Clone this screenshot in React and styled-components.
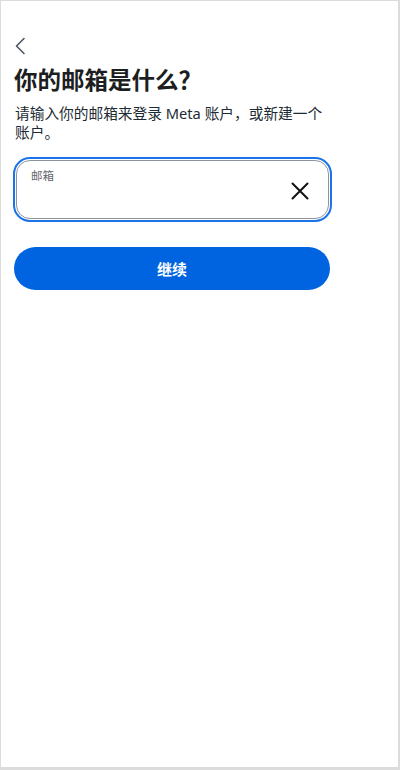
import React, { useState } from 'react';
import styled, { createGlobalStyle } from 'styled-components';

const GlobalStyles = createGlobalStyle`
  html, body {
    margin: 0;
    padding: 0;
    background: #ffffff;
  }
  * {
    box-sizing: border-box;
  }
  body {
    font-family: 'Noto Sans', 'Noto Sans CJK SC', sans-serif;
    color: #1c2b33;
  }
`;

const App = () => {
  const [email, setEmail] = useState('');

  return (
    <>
      <GlobalStyles />
      <Frame>
        <Content>
          <BackButton aria-label="返回">
            <svg width="12" height="18" viewBox="0 0 12 18" fill="none">
              <path d="M10 1.5 L2.5 9 L10 16.5" stroke="#4b5563" strokeWidth="1.6" strokeLinecap="round" strokeLinejoin="round" />
            </svg>
          </BackButton>
          <Title>你的邮箱是什么？</Title>
          <Subtitle>请输入你的邮箱来登录 Meta 账户，或新建一个账户。</Subtitle>
          <FieldRing>
            <Field>
              <FieldLabel>邮箱</FieldLabel>
              <FieldInput value={email} onChange={(e) => setEmail(e.target.value)} />
              <ClearButton aria-label="清除" onClick={() => setEmail('')}>
                <svg width="18" height="18" viewBox="0 0 18 18" fill="none">
                  <path d="M1.5 1.5 L16.5 16.5 M16.5 1.5 L1.5 16.5" stroke="#111111" strokeWidth="2" strokeLinecap="round" />
                </svg>
              </ClearButton>
            </Field>
          </FieldRing>
          <PrimaryButton>继续</PrimaryButton>
        </Content>
      </Frame>
    </>
  );
};

export default App;

const Frame = styled.div`
  width: 400px;
  height: 770px;
  border-top: 1px solid #dcdcdc;
  border-left: 1px solid #dcdcdc;
  border-right: 2px solid #dcdcdc;
  border-bottom: 3px solid #dcdcdc;
  background: #fff;
  overflow: hidden;
`;

const Content = styled.div`
  width: 332px;
  padding: 36px 0 0 12px;
  display: flex;
  flex-direction: column;
`;

const BackButton = styled.button`
  width: 14px;
  height: 18px;
  padding: 0;
  margin: 0 0 0 1px;
  border: none;
  background: none;
  display: flex;
  align-items: center;
  cursor: pointer;
`;

const Title = styled.h1`
  margin: 11px 0 0 1px;
  font-size: 23.5px;
  line-height: 28px;
  font-weight: 700;
  color: #1c1e21;
  letter-spacing: 0;
`;

const Subtitle = styled.p`
  margin: 10px 0 0 2px;
  width: 316px;
  font-size: 14.7px;
  line-height: 19px;
  color: #1c2b33;
`;

const FieldRing = styled.div`
  margin-top: 15px;
  width: 319px;
  height: 65px;
  border: 2px solid #1a73e8;
  border-radius: 17px;
  padding: 1px;
`;

const Field = styled.div`
  position: relative;
  height: 100%;
  border: 1px solid #8d949e;
  border-radius: 14px;
  display: flex;
  align-items: center;
  padding: 0 18px 0 15px;
`;

const FieldLabel = styled.span`
  position: absolute;
  left: 14px;
  top: 8px;
  font-size: 11.5px;
  line-height: 14px;
  color: #65676b;
`;

const FieldInput = styled.input`
  flex: 1;
  min-width: 0;
  margin-top: 18px;
  border: none;
  outline: none;
  background: transparent;
  font-family: inherit;
  font-size: 15px;
  color: #1c2b33;
`;

const ClearButton = styled.button`
  width: 20px;
  height: 20px;
  padding: 0;
  margin-top: 3px;
  border: none;
  background: none;
  display: flex;
  align-items: center;
  justify-content: center;
  cursor: pointer;
`;

const PrimaryButton = styled.button`
  margin: 25px 0 0 1px;
  width: 316px;
  height: 43px;
  border: none;
  border-radius: 22px;
  background: #0064e0;
  color: #ffffff;
  font-family: inherit;
  font-size: 15px;
  font-weight: 700;
  cursor: pointer;
`;
